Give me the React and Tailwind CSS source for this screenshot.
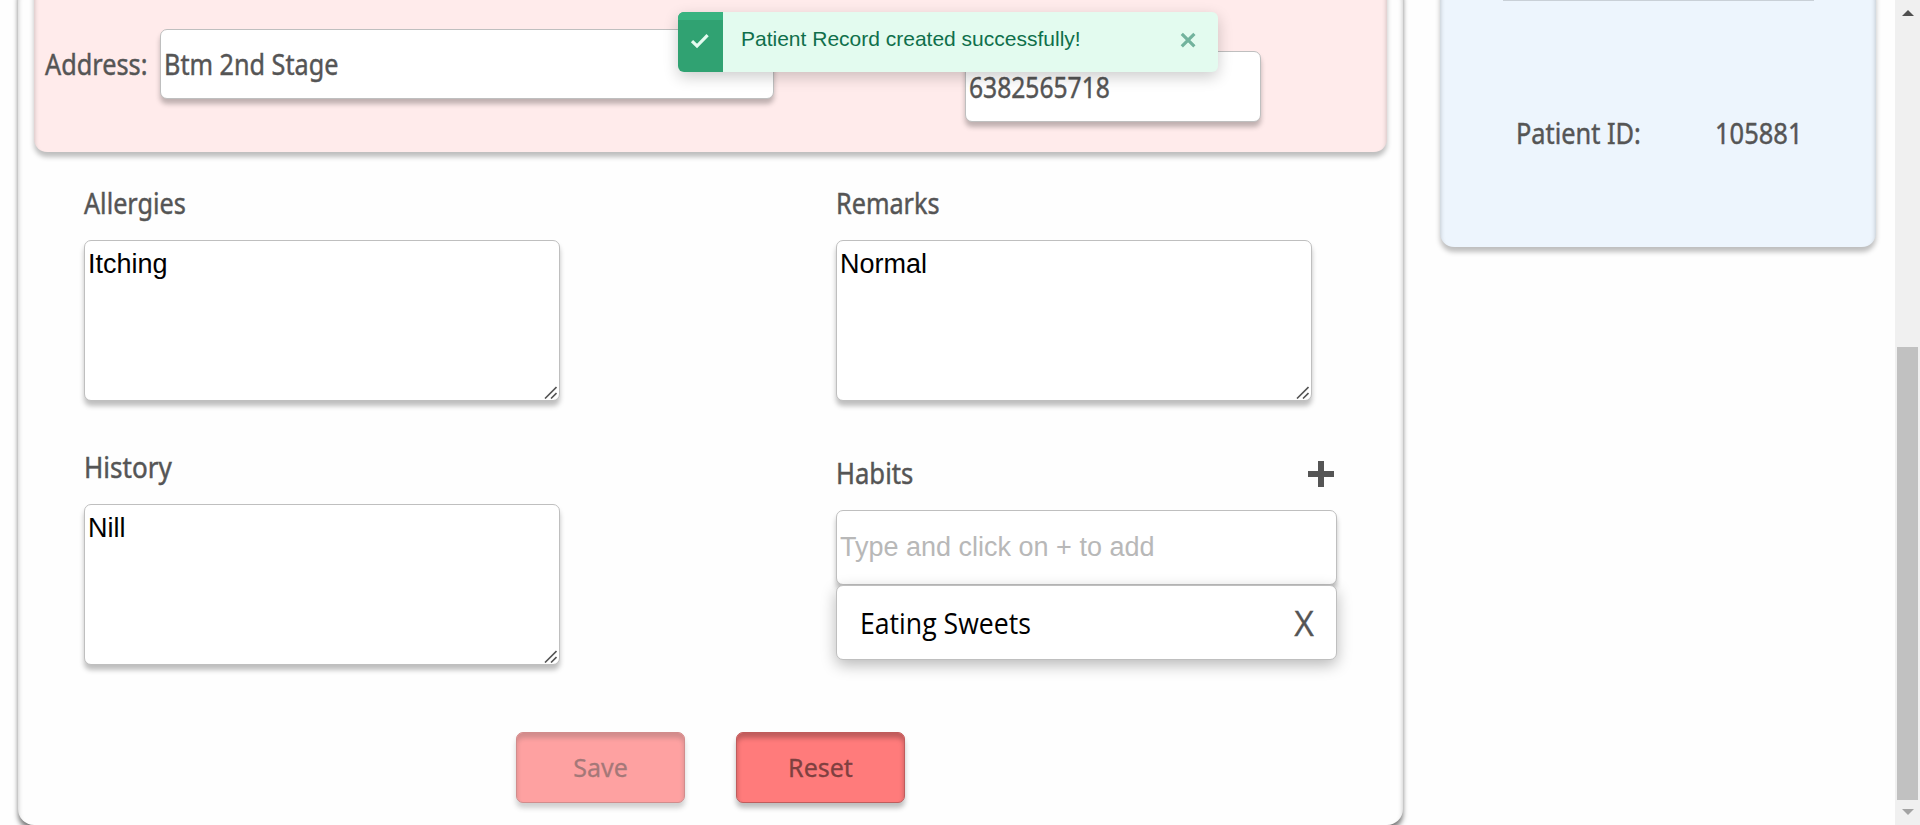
import React from "react";

const label =
  "block w-max origin-left whitespace-nowrap font-['Noto_Sans',sans-serif] text-[28.8px] leading-[40px] text-[#555] [-webkit-text-stroke:0.45px_#555]";
const box = "rounded-[7px] border border-[#bfbfbf] bg-white shadow-[0_5px_5px_rgba(0,0,0,0.25)]";

function Label({ className = "", children }) {
  return <span className={`${label} ${className}`}>{children}</span>;
}

function NoteField({ title, titleClass, value }) {
  return (
    <div className="w-[476px]">
      <Label className={titleClass}>{title}</Label>
      <div className="relative mt-[17px] h-[161px]">
        <textarea
          className={`${box} block h-full w-full resize-none px-[3px] pt-[8px] font-['Liberation_Sans',Arial,sans-serif] text-[27px] leading-[31px] text-black outline-none`}
          defaultValue={value}
        />
        <svg className="absolute right-[3px] bottom-[2px]" width="13" height="13" viewBox="0 0 13 13" stroke="#555" strokeWidth="1.6">
          <path d="M1 12.5 12.5 1M7 12.5l5.5-5.5" />
        </svg>
      </div>
    </div>
  );
}

function Toast() {
  return (
    <div className="absolute top-[12px] left-[678px] flex h-[60px] w-[540px] overflow-hidden rounded-[6px] bg-[#e3fbef] shadow-[0_5px_15px_rgba(0,0,0,0.2)]">
      <div className="flex w-[45px] flex-col bg-[#30a272]">
        <div className="h-[8px] bg-[#38b380]" />
        <svg className="mt-[13px] ml-[12px]" width="20" height="16" viewBox="0 0 20 16" fill="none" stroke="#e3fbef" strokeWidth="3.2">
          <path d="M2 8.2 7 13 17.6 2.2" />
        </svg>
      </div>
      <div className="flex-1 pt-[15px] pl-[18px] font-['Liberation_Sans',Arial,sans-serif] text-[21px] leading-[24px] text-[#0f6f4b]">
        Patient Record created successfully!
      </div>
      <svg className="mt-[20px] mr-[22px]" width="16" height="16" viewBox="0 0 16 16" stroke="#72b39d" strokeWidth="3.2">
        <path d="M1.8 1.8l12.6 12.6M14.4 1.8 1.8 14.4" />
      </svg>
    </div>
  );
}

function Scrollbar() {
  return (
    <div className="ml-auto flex h-full w-[25px] flex-col items-center bg-[#f0f0f0]">
      <svg className="mt-[10px]" width="12" height="6" viewBox="0 0 12 6" fill="#505050">
        <path d="M6 0l6 6H0z" />
      </svg>
      <div className="mt-[331px] h-[453px] w-[21px] bg-[#c1c1c1]" />
      <svg className="mt-[9px]" width="12" height="6" viewBox="0 0 12 6" fill="#a3a3a3">
        <path d="M6 6l6-6H0z" />
      </svg>
    </div>
  );
}

const button =
  "h-[71px] w-[169px] rounded-[7px] border border-[#bf5c5c] bg-[#ff7b7b] pb-[1px] font-['Noto_Sans',sans-serif] text-[25px] leading-[30px] text-[#7f4040] [-webkit-text-stroke:0.3px_#7f4040] shadow-[0_5px_5px_rgba(0,0,0,0.25),inset_0_5px_5px_rgba(0,0,0,0.25)]";

export default function App() {
  return (
    <div className="relative flex h-[825px] w-full overflow-hidden bg-[#fefefe]">
      <main className="-mt-[20px] ml-[18px] h-[845px] w-[1385px] shrink-0 rounded-[16px] bg-[#fefefe] px-[16px] shadow-[0_5px_5px_rgba(0,0,0,0.5),inset_0_5px_5px_rgba(0,0,0,0.25)]">
        <section className="flex h-[172px] w-[1353px] rounded-b-[13px] bg-[#ffebeb] pt-[20px] pl-[11px] shadow-[0_5px_5px_rgba(0,0,0,0.25),inset_0_5px_5px_rgba(0,0,0,0.25)]">
          <div className="w-[115px] pt-[44px]">
            <Label className="scale-x-[0.878]">Address:</Label>
          </div>
          <div className={`${box} mt-[29px] h-[70px] w-[614px] pt-[14px] pl-[2.5px]`}>
            <Label className="scale-x-[0.875]">Btm 2nd Stage</Label>
          </div>
          <div className={`${box} mt-[51px] ml-[191px] h-[71px] w-[296px] pt-[15px] pl-[3px]`}>
            <Label className="scale-x-[0.855]">6382565718</Label>
          </div>
        </section>

        <div className="flex justify-between pt-[31px] pr-[32px] pl-[50px]">
          <div className="flex flex-col gap-[46px]">
            <NoteField title="Allergies" titleClass="scale-x-[0.876]" value="Itching" />
            <NoteField title="History" titleClass="scale-x-[0.905]" value="Nill" />
          </div>
          <div className="w-[519px]">
            <NoteField title="Remarks" titleClass="scale-x-[0.875]" value="Normal" />
            <div className="mt-[52px] w-[501px]">
              <div className="flex items-start justify-between">
                <Label className="scale-x-[0.89]">Habits</Label>
                <svg className="mt-[8px] mr-[3px]" width="26" height="26" viewBox="0 0 26 26" stroke="#555" strokeWidth="6">
                  <path d="M13 0v26M0 13h26" />
                </svg>
              </div>
              <input
                className={`${box} mt-[17px] block h-[75px] w-full px-[3px] font-['Liberation_Sans',Arial,sans-serif] text-[27px] outline-none placeholder:text-[#b8b8b8]`}
                placeholder="Type and click on + to add"
              />
              <div className="flex h-[75px] items-center justify-between rounded-[7px] border border-[#bfbfbf] bg-white pr-[22px] pl-[22.5px] shadow-[0_5px_15px_rgba(0,0,0,0.28)]">
                <span className="w-max origin-left scale-x-[0.925] font-['Open_Sans','Noto_Sans',sans-serif] text-[28.8px] leading-[40px] text-black">
                  Eating Sweets
                </span>
                <span className="font-['Open_Sans','Noto_Sans',sans-serif] text-[34px] leading-[40px] text-[#555] [-webkit-text-stroke:0.3px_#555]">X</span>
              </div>
            </div>
          </div>
        </div>

        <div className="mt-[67px] flex gap-[51px] pl-[482px]">
          <button className={`${button} opacity-70`}>Save</button>
          <button className={button}>Reset</button>
        </div>
      </main>

      <aside className="-mt-[20px] ml-[37px] h-[267px] w-[436px] shrink-0 rounded-[14px] bg-[#edf5fd] pt-[20px] shadow-[0_5px_5px_rgba(0,0,0,0.25),inset_0_5px_5px_rgba(0,0,0,0.25)]">
        <div className="ml-[63px] h-px w-[311px] bg-[#c9d0d7]" />
        <div className="flex pt-[112px] pl-[75.5px]">
          <div className="w-[199.5px]">
            <Label className="scale-x-[0.88]">Patient ID:</Label>
          </div>
          <Label className="scale-x-[0.885]">105881</Label>
        </div>
      </aside>

      <Scrollbar />
      <Toast />
    </div>
  );
}
